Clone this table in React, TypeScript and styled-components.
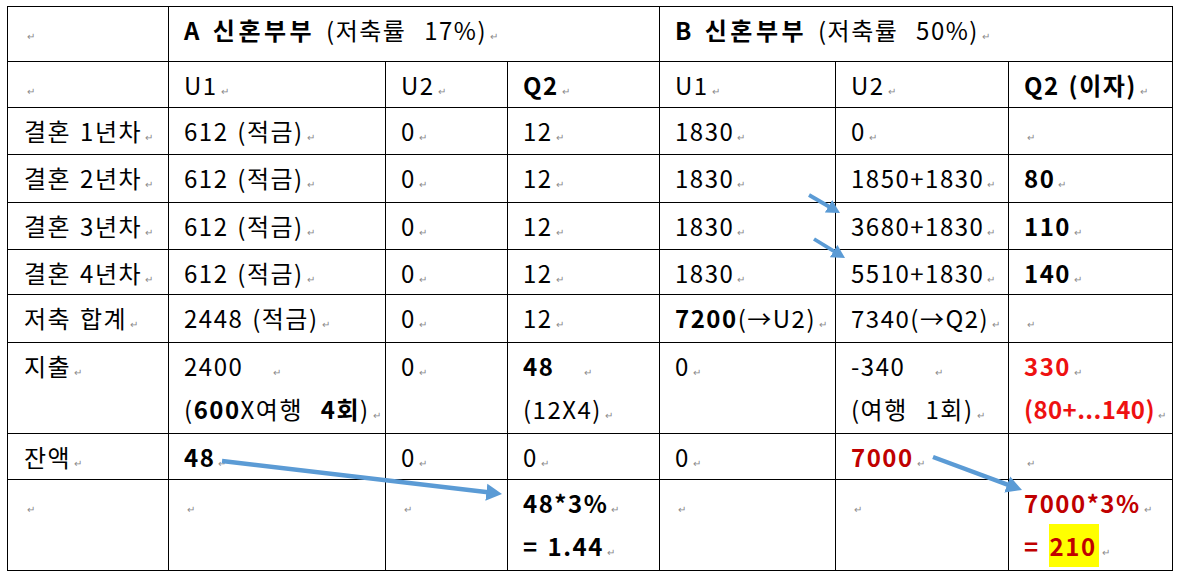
import styled, { createGlobalStyle } from 'styled-components';

const GlobalStyle = createGlobalStyle`
  html, body { margin: 0; padding: 0; background: #fff; }
  body {
    font-family: "Noto Sans CJK KR", "Noto Sans", sans-serif;
    color: #000;
  }
`;

const Page = styled.div`
  position: relative;
  padding: 6px 0 0 7px;
  width: 1179px;
  height: 578px;
  box-sizing: border-box;
  overflow: hidden;
`;

const Table = styled.table`
  border-collapse: collapse;
  table-layout: fixed;
  width: 1165px;
`;

const Row = styled.tr<{ $h: number }>`
  height: ${p => p.$h}px;
`;

const Cell = styled.td`
  border: 1px solid #000;
  padding: 5px 0 0 15px;
  vertical-align: top;
  font-size: 24px;
  line-height: 36px;
  letter-spacing: 1.5px;
  word-spacing: 2px;
  white-space: nowrap;
  overflow: hidden;
  &:first-child { padding-left: 16px; }
`;

const Line = styled.div`
  height: 36px;
  & + & { margin-top: 7px; }
`;

const B = styled.b<{ $c?: string; $ls?: number }>`
  font-weight: 700;
  color: ${p => p.$c ?? 'inherit'};
  ${p => p.$ls !== undefined && `letter-spacing: ${p.$ls}px;`}
`;

const Title = styled.b`
  font-weight: 700;
  letter-spacing: 3.5px;
  word-spacing: 1px;
  margin-right: 2px;
`;

const Hi = styled.span`
  display: inline-block;
  background: #ffff00;
  line-height: 43px;
  height: 43px;
  margin-top: -4px;
  padding: 0 2px 0 1px;
  vertical-align: top;
`;

const Mark = styled.span`
  font-size: 10px;
  line-height: 1;
  letter-spacing: 0;
  color: #8a8a8a;
  margin-left: 3px;
  font-weight: 400;
`;

const Arrows = styled.svg`
  position: absolute;
  left: 0;
  top: 0;
  pointer-events: none;
`;

const RED = '#ee1111';
const DARK = '#c00000';
const BLUE = '#5b9bd5';

const M = () => <Mark>↵</Mark>;

const Year = ({ n, u2, q2 }: { n: number; u2: React.ReactNode; q2: React.ReactNode }) => (
  <Row $h={[47, 48, 47, 45][n - 1]}>
    <Cell>결혼 {n}년차<M /></Cell>
    <Cell>612 (적금)<M /></Cell>
    <Cell>0<M /></Cell>
    <Cell>12<M /></Cell>
    <Cell>1830<M /></Cell>
    <Cell>{u2}<M /></Cell>
    <Cell>{q2}<M /></Cell>
  </Row>
);

const arrows = [
  { x1: 222, y1: 461, x2: 502, y2: 494, w: 4.5 },
  { x1: 933, y1: 457, x2: 1022, y2: 490, w: 4.5 },
  { x1: 809, y1: 195, x2: 840, y2: 213, w: 3.8 },
  { x1: 814, y1: 239, x2: 845, y2: 258, w: 3.8 },
];

export default function App() {
  return (
    <Page>
      <GlobalStyle />
      <Table>
        <colgroup>
          {[161, 217, 122, 152, 176, 173, 164].map((w, i) => <col key={i} style={{ width: w }} />)}
        </colgroup>
        <tbody>
          <Row $h={55}>
            <Cell><M /></Cell>
            <Cell colSpan={3}><Title>A 신혼부부</Title> (저축률&nbsp; 17%)<M /></Cell>
            <Cell colSpan={3}><Title>B 신혼부부</Title> (저축률&nbsp; 50%)<M /></Cell>
          </Row>
          <Row $h={46}>
            <Cell><M /></Cell>
            <Cell>U1<M /></Cell>
            <Cell>U2<M /></Cell>
            <Cell><B>Q2</B><M /></Cell>
            <Cell>U1<M /></Cell>
            <Cell>U2<M /></Cell>
            <Cell><B>Q2 (이자)</B><M /></Cell>
          </Row>
          <Year n={1} u2="0" q2="" />
          <Year n={2} u2="1850+1830" q2={<B>80</B>} />
          <Year n={3} u2="3680+1830" q2={<B>110</B>} />
          <Year n={4} u2="5510+1830" q2={<B>140</B>} />
          <Row $h={48}>
            <Cell>저축 합계<M /></Cell>
            <Cell>2448 (적금)<M /></Cell>
            <Cell>0<M /></Cell>
            <Cell>12<M /></Cell>
            <Cell><B>7200</B>(→U2)<M /></Cell>
            <Cell>7340(→Q2)<M /></Cell>
            <Cell><M /></Cell>
          </Row>
          <Row $h={91}>
            <Cell>지출<M /></Cell>
            <Cell>
              <Line>2400&nbsp;&nbsp;&nbsp;<M /></Line>
              <Line>(<B>600</B>X여행&nbsp; <B>4회</B>)<M /></Line>
            </Cell>
            <Cell>0<M /></Cell>
            <Cell>
              <Line><B>48</B>&nbsp;&nbsp;&nbsp;<M /></Line>
              <Line>(12X4)<M /></Line>
            </Cell>
            <Cell>0<M /></Cell>
            <Cell>
              <Line>-340&nbsp;&nbsp;&nbsp;<M /></Line>
              <Line>(여행&nbsp; 1회)<M /></Line>
            </Cell>
            <Cell>
              <Line><B $c={RED}>330</B><M /></Line>
              <Line><B $c={RED} $ls={0.4}>(80+...140)</B><M /></Line>
            </Cell>
          </Row>
          <Row $h={46}>
            <Cell>잔액<M /></Cell>
            <Cell><B>48</B><M /></Cell>
            <Cell>0<M /></Cell>
            <Cell>0<M /></Cell>
            <Cell>0<M /></Cell>
            <Cell><B $c={DARK}>7000</B><M /></Cell>
            <Cell><M /></Cell>
          </Row>
          <Row $h={91}>
            <Cell><M /></Cell>
            <Cell><M /></Cell>
            <Cell><M /></Cell>
            <Cell>
              <Line><B>48*3%</B><M /></Line>
              <Line><B>= 1.44</B><M /></Line>
            </Cell>
            <Cell><M /></Cell>
            <Cell><M /></Cell>
            <Cell>
              <Line><B $c={DARK}>7000*3%</B><M /></Line>
              <Line><B $c={DARK}>= <Hi>210</Hi></B><M /></Line>
            </Cell>
          </Row>
        </tbody>
      </Table>
      <Arrows width={1179} height={578} viewBox="0 0 1179 578">
        <defs>
          <marker id="head" markerWidth="4" markerHeight="4" refX="1.8" refY="2" orient="auto" markerUnits="strokeWidth">
            <path d="M0,0.1 L3.5,2 L0,3.9 Z" fill={BLUE} />
          </marker>
        </defs>
        {arrows.map((a, i) => {
          const dx = a.x2 - a.x1;
          const dy = a.y2 - a.y1;
          const len = Math.hypot(dx, dy);
          const k = (len - 1.7 * a.w) / len;
          return (
            <line
              key={i}
              x1={a.x1}
              y1={a.y1}
              x2={a.x1 + dx * k}
              y2={a.y1 + dy * k}
              stroke={BLUE}
              strokeWidth={a.w}
              markerEnd="url(#head)"
            />
          );
        })}
      </Arrows>
    </Page>
  );
}
